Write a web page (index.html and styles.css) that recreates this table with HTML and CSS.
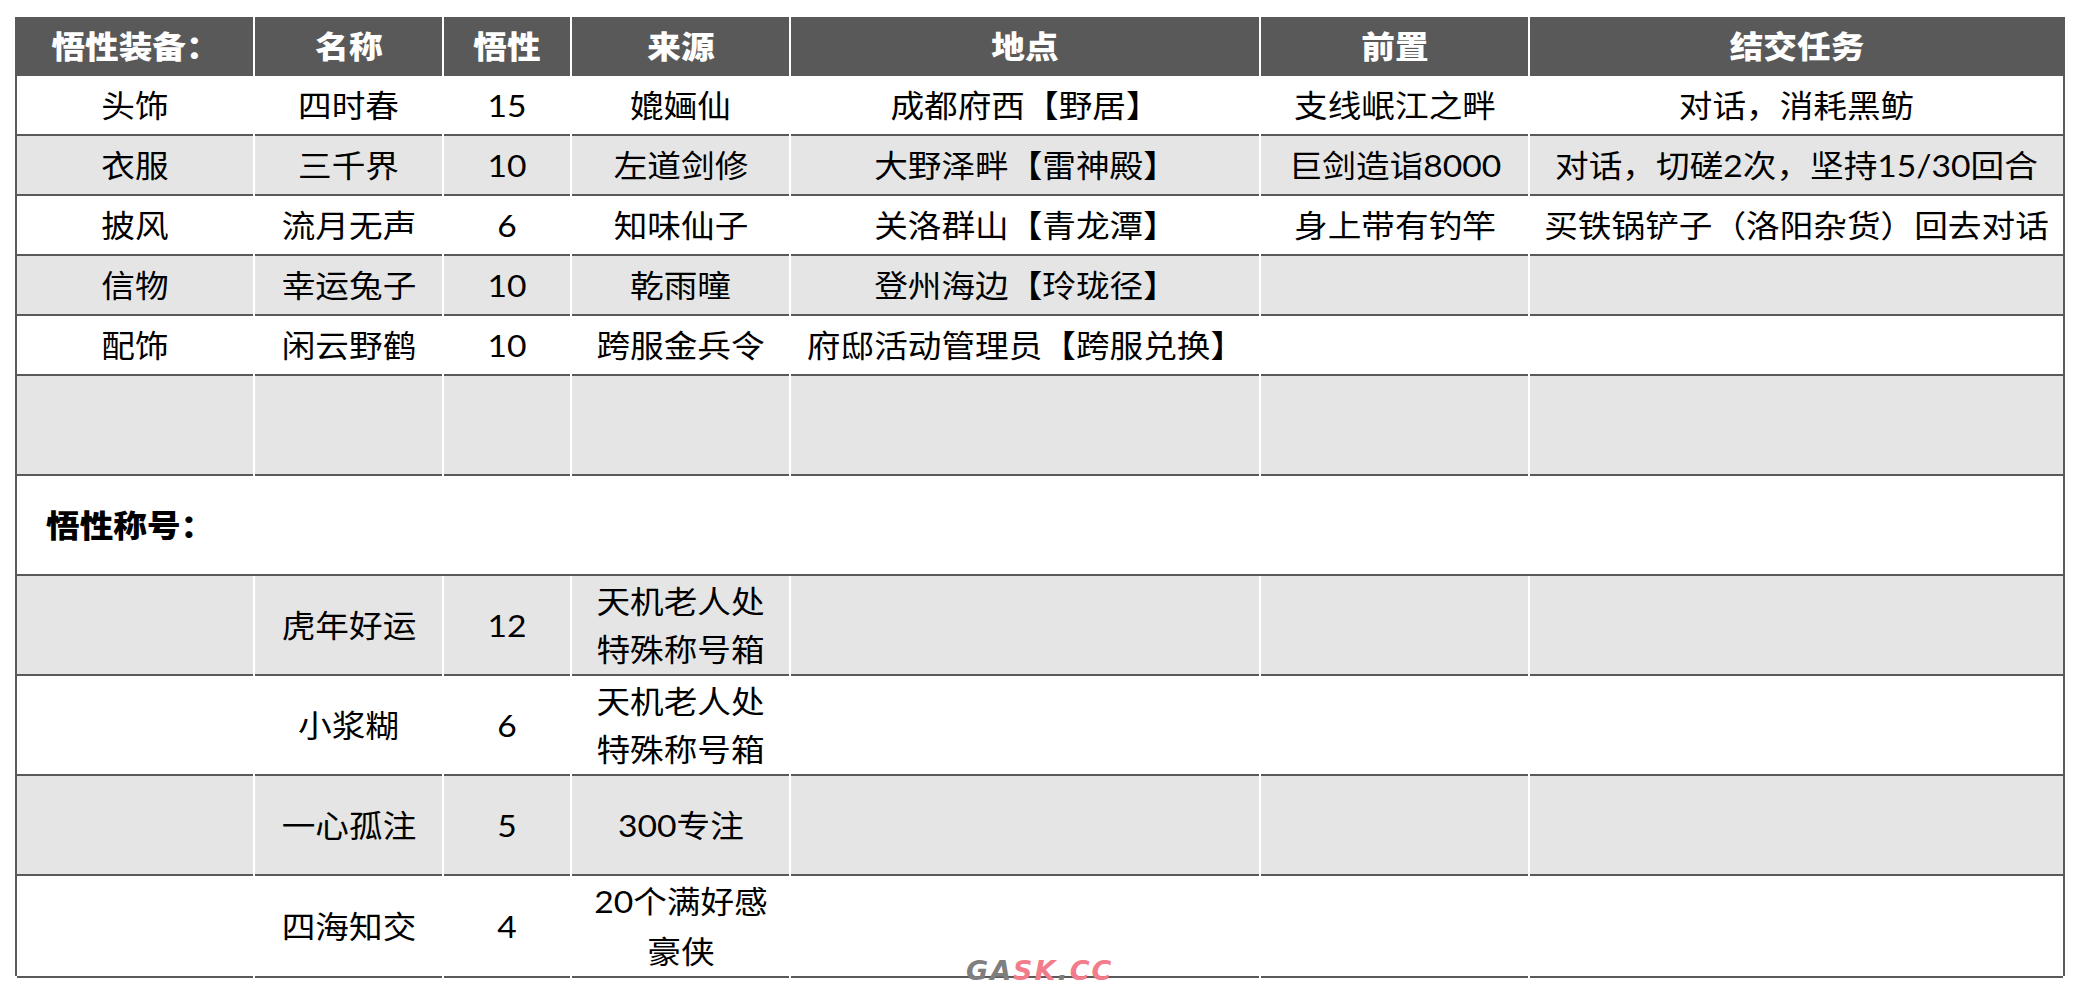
FILE: index.html
```html
<!DOCTYPE html>
<html lang="zh-CN">
<head>
<meta charset="utf-8">
<title>悟性装备</title>
<link rel="stylesheet" href="styles.css">
</head>
<body>
<div class="page">
  <div class="sheet">
    <div class="row head">
      <div class="cell"><span class="t">悟性装备：</span></div>
      <div class="cell"><span class="t">名称</span></div>
      <div class="cell"><span class="t">悟性</span></div>
      <div class="cell"><span class="t">来源</span></div>
      <div class="cell"><span class="t">地点</span></div>
      <div class="cell"><span class="t">前置</span></div>
      <div class="cell"><span class="t">结交任务</span></div>
    </div>
    <div class="row w">
      <div class="cell"><span class="t">头饰</span></div>
      <div class="cell"><span class="t">四时春</span></div>
      <div class="cell"><span class="t">15</span></div>
      <div class="cell"><span class="t">媲婳仙</span></div>
      <div class="cell"><span class="t">成都府西【野居】</span></div>
      <div class="cell"><span class="t">支线岷江之畔</span></div>
      <div class="cell"><span class="t">对话，消耗黑鲂</span></div>
    </div>
    <div class="row g">
      <div class="cell"><span class="t">衣服</span></div>
      <div class="cell"><span class="t">三千界</span></div>
      <div class="cell"><span class="t">10</span></div>
      <div class="cell"><span class="t">左道剑修</span></div>
      <div class="cell"><span class="t">大野泽畔【雷神殿】</span></div>
      <div class="cell"><span class="t">巨剑造诣8000</span></div>
      <div class="cell"><span class="t">对话，切磋2次，坚持15/30回合</span></div>
    </div>
    <div class="row w">
      <div class="cell"><span class="t">披风</span></div>
      <div class="cell"><span class="t">流月无声</span></div>
      <div class="cell"><span class="t">6</span></div>
      <div class="cell"><span class="t">知味仙子</span></div>
      <div class="cell"><span class="t">关洛群山【青龙潭】</span></div>
      <div class="cell"><span class="t">身上带有钓竿</span></div>
      <div class="cell"><span class="t">买铁锅铲子（洛阳杂货）回去对话</span></div>
    </div>
    <div class="row g">
      <div class="cell"><span class="t">信物</span></div>
      <div class="cell"><span class="t">幸运兔子</span></div>
      <div class="cell"><span class="t">10</span></div>
      <div class="cell"><span class="t">乾雨曈</span></div>
      <div class="cell"><span class="t">登州海边【玲珑径】</span></div>
      <div class="cell"></div>
      <div class="cell"></div>
    </div>
    <div class="row w">
      <div class="cell"><span class="t">配饰</span></div>
      <div class="cell"><span class="t">闲云野鹤</span></div>
      <div class="cell"><span class="t">10</span></div>
      <div class="cell"><span class="t">跨服金兵令</span></div>
      <div class="cell"><span class="t">府邸活动管理员【跨服兑换】</span></div>
      <div class="cell"></div>
      <div class="cell"></div>
    </div>
    <div class="row g tall">
      <div class="cell"></div>
      <div class="cell"></div>
      <div class="cell"></div>
      <div class="cell"></div>
      <div class="cell"></div>
      <div class="cell"></div>
      <div class="cell"></div>
    </div>
    <div class="row w tall">
      <div class="cell title"><span class="t">悟性称号：</span></div>
    </div>
    <div class="row g tall">
      <div class="cell"></div>
      <div class="cell"><span class="t">虎年好运</span></div>
      <div class="cell"><span class="t">12</span></div>
      <div class="cell"><span class="t two">天机老人处<br>特殊称号箱</span></div>
      <div class="cell"></div>
      <div class="cell"></div>
      <div class="cell"></div>
    </div>
    <div class="row w tall">
      <div class="cell"></div>
      <div class="cell"><span class="t">小浆糊</span></div>
      <div class="cell"><span class="t">6</span></div>
      <div class="cell"><span class="t two">天机老人处<br>特殊称号箱</span></div>
      <div class="cell"></div>
      <div class="cell"></div>
      <div class="cell"></div>
    </div>
    <div class="row g tall">
      <div class="cell"></div>
      <div class="cell"><span class="t">一心孤注</span></div>
      <div class="cell"><span class="t">5</span></div>
      <div class="cell"><span class="t">300专注</span></div>
      <div class="cell"></div>
      <div class="cell"></div>
      <div class="cell"></div>
    </div>
    <div class="row w tall">
      <div class="cell"></div>
      <div class="cell"><span class="t">四海知交</span></div>
      <div class="cell"><span class="t">4</span></div>
      <div class="cell"><span class="t two wide">20个满好感<br>豪侠</span></div>
      <div class="cell"></div>
      <div class="cell"></div>
      <div class="cell"></div>
    </div>
  </div>
  <div class="mark"><span class="mg">GA</span><span class="mp">SK</span><span class="mg">.</span><span class="mp">CC</span></div>
</div>
</body>
</html>
```
FILE: styles.css
```css
* { box-sizing: border-box; }
html, body { margin: 0; padding: 0; background: #fff; }
body {
  font-family: "Lato", "Noto Sans CJK SC", sans-serif;
  color: #000;
}
.page {
  position: relative;
  width: 2080px;
  height: 992px;
  padding: 17px 0 0 15px;
}
.sheet {
  display: flex;
  flex-direction: column;
  width: 2050px;
  border-left: 2px solid #595959;
  border-right: 2px solid #595959;
  background: #fff;
}
.row {
  display: grid;
  grid-template-columns: 236px 187px 126px 217px 468px 267px 533px;
  column-gap: 2px;
  height: 60px;
}
.row.head { height: 59px; }
.row.tall { height: 100px; }
.cell {
  display: flex;
  align-items: center;
  justify-content: center;
  text-align: center;
  border-bottom: 2px solid #595959;
  font-size: 31px;
  font-weight: 400;
  line-height: 36px;
  white-space: nowrap;
}
.row.w .cell { background: #fff; }
.row.g .cell { background: #e5e5e5; }
.row.head .cell {
  background: #595959;
  color: #fff;
  font-weight: 900;
  border-bottom-color: #595959;
}
.t {
  display: inline-block;
  transform: scaleX(1.085);
}
.t.two { line-height: 48px; }
.t.wide { line-height: 50px; }
.cell.title {
  grid-column: 1 / -1;
  justify-content: flex-start;
  padding-left: 29px;
  font-weight: 900;
}
.cell.title .t { transform-origin: left center; }
.mark {
  position: absolute;
  left: 966px;
  top: 956px;
  font-family: "DejaVu Sans", sans-serif;
  font-weight: 700;
  font-style: italic;
  font-size: 27px;
  line-height: 30px;
  letter-spacing: 2px;
}
.mg { color: #7f7f7f; }
.mp { color: #f27b8c; }
```
